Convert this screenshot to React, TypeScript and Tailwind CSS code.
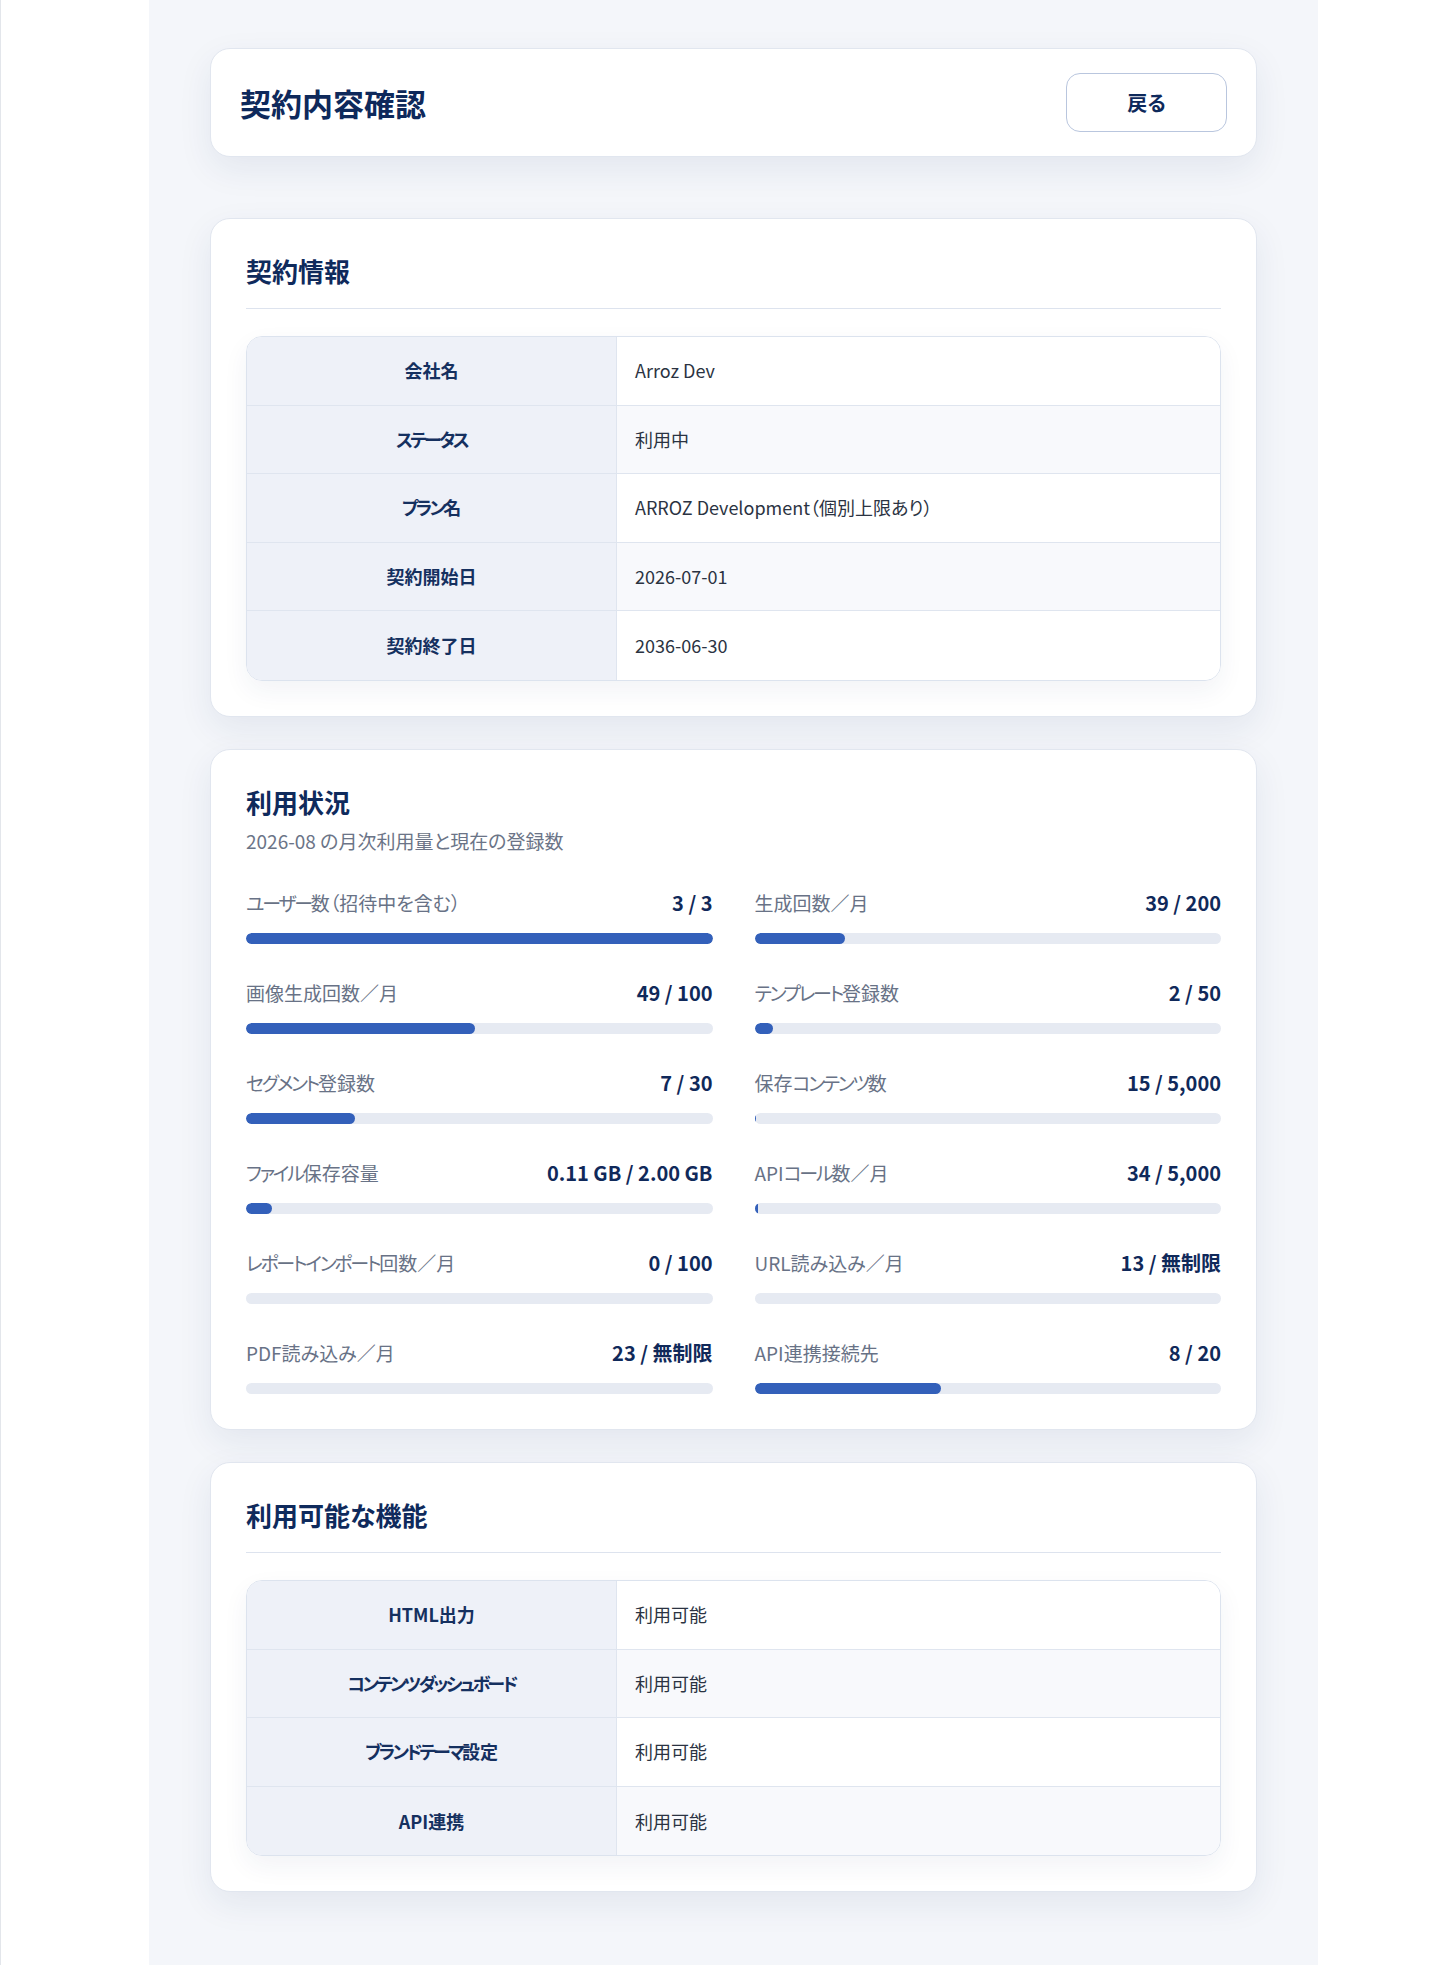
import React from "react";

type Row = { label: string; value: string };
type Usage = { label: string; used: number; limit: number | null; text: string };

const contract: Row[] = [
  { label: "会社名", value: "Arroz Dev" },
  { label: "ステータス", value: "利用中" },
  { label: "プラン名", value: "ARROZ Development（個別上限あり）" },
  { label: "契約開始日", value: "2026-07-01" },
  { label: "契約終了日", value: "2036-06-30" },
];

const usage: Usage[] = [
  { label: "ユーザー数（招待中を含む）", used: 3, limit: 3, text: "3 / 3" },
  { label: "生成回数／月", used: 39, limit: 200, text: "39 / 200" },
  { label: "画像生成回数／月", used: 49, limit: 100, text: "49 / 100" },
  { label: "テンプレート登録数", used: 2, limit: 50, text: "2 / 50" },
  { label: "セグメント登録数", used: 7, limit: 30, text: "7 / 30" },
  { label: "保存コンテンツ数", used: 15, limit: 5000, text: "15 / 5,000" },
  { label: "ファイル保存容量", used: 0.11, limit: 2, text: "0.11 GB / 2.00 GB" },
  { label: "APIコール数／月", used: 34, limit: 5000, text: "34 / 5,000" },
  { label: "レポートインポート回数／月", used: 0, limit: 100, text: "0 / 100" },
  { label: "URL読み込み／月", used: 13, limit: null, text: "13 / 無制限" },
  { label: "PDF読み込み／月", used: 23, limit: null, text: "23 / 無制限" },
  { label: "API連携接続先", used: 8, limit: 20, text: "8 / 20" },
];

const features: Row[] = [
  { label: "HTML出力", value: "利用可能" },
  { label: "コンテンツダッシュボード", value: "利用可能" },
  { label: "ブランドテーマ設定", value: "利用可能" },
  { label: "API連携", value: "利用可能" },
];

function Kana({ text, tight }: { text: string; tight: string }) {
  const parts = text.split(/([\u30A0-\u30FF]+)/);
  return (
    <>
      {parts.map((p, i) =>
        i % 2 === 1 ? (
          <span key={i} className={tight}>
            {p}
          </span>
        ) : (
          <React.Fragment key={i}>{p}</React.Fragment>
        )
      )}
    </>
  );
}

function Card({ children, className = "" }: { children: React.ReactNode; className?: string }) {
  return (
    <section
      className={
        "rounded-[20px] border border-[#e1e6ef] bg-white shadow-[0_12px_34px_rgba(28,52,104,0.08)] " +
        className
      }
    >
      {children}
    </section>
  );
}

function InfoTable({ rows }: { rows: Row[] }) {
  return (
    <div className="mt-[27px] overflow-hidden rounded-2xl border border-[#dce3ee] shadow-[0_10px_26px_rgba(28,52,104,0.06)]">
      {rows.map((r, i) => (
        <div
          key={r.label}
          className={
            "flex h-[68.6px] " + (i < rows.length - 1 ? "border-b border-[#dfe5ef]" : "")
          }
        >
          <div className="flex w-[370px] shrink-0 items-center justify-center border-r border-[#dfe5ef] bg-[#eef1f8] text-[18px] font-bold text-[#15305f]">
            <span>
              <Kana text={r.label} tight="tracking-[-0.15em]" />
            </span>
          </div>
          <div
            className={
              "flex flex-1 items-center px-[18px] text-[18px] text-[#2b3342] " +
              (i % 2 === 1 ? "bg-[#f8f9fc]" : "bg-white")
            }
          >
            {r.value}
          </div>
        </div>
      ))}
    </div>
  );
}

function SectionTitle({ children, divider }: { children: React.ReactNode; divider?: boolean }) {
  return (
    <h2
      className={
        "text-[26px] font-bold leading-[34px] text-[#0f2a5c] " +
        (divider ? "border-b border-[#dde3ee] pb-[20px]" : "")
      }
    >
      {children}
    </h2>
  );
}

function UsageItem({ item }: { item: Usage }) {
  const pct = item.limit ? Math.min(100, (item.used / item.limit) * 100) : 0;
  return (
    <div>
      <div className="flex h-[30px] items-center justify-between leading-[30px]">
        <span className="text-[19px] text-[#687286]">
          <Kana text={item.label} tight="tracking-[-0.12em]" />
        </span>
        <span className="text-[20px] font-bold text-[#10295a]">{item.text}</span>
      </div>
      <div className="mt-[15px] h-[11px] w-full overflow-hidden rounded-full bg-[#e6eaf2]">
        <div className="h-full rounded-full bg-[#3360ba]" style={{ width: `${pct}%` }} />
      </div>
    </div>
  );
}

export default function App() {
  return (
    <div
      className="flex min-h-[1965px] border-l border-[#e3e6eb] bg-white [font-feature-settings:'palt']"
      style={{ fontFamily: '"Noto Sans CJK JP", "Noto Sans", sans-serif' }}
    >
      <div className="w-[148px] shrink-0" />
      <main className="w-[1169px] shrink-0 bg-[#f4f6fa] px-[61px] pb-[73px] pt-[48px]">
        {/* page header */}
        <Card className="flex items-center justify-between px-[29px] py-[24px]">
          <h1 className="text-[31px] font-bold leading-[40px] text-[#0e295b]">契約内容確認</h1>
          <button className="h-[59px] w-[161px] rounded-[14px] border border-[#b9c6de] bg-white text-[20px] font-bold text-[#0e295b]">
            戻る
          </button>
        </Card>

        {/* contract information */}
        <Card className="mt-[61px] p-[35px]">
          <SectionTitle divider>契約情報</SectionTitle>
          <InfoTable rows={contract} />
        </Card>

        {/* usage */}
        <Card className="mt-[32px] p-[35px]">
          <SectionTitle>利用状況</SectionTitle>
          <p className="mt-2 text-[19px] leading-[27px] text-[#6b7487]">
            2026-08 の月次利用量と現在の登録数
          </p>
          <div className="mt-[34px] grid grid-cols-2 gap-x-[42px] gap-y-[34px]">
            {usage.map((u) => (
              <UsageItem key={u.label} item={u} />
            ))}
          </div>
        </Card>

        {/* available features */}
        <Card className="mt-[32px] p-[35px]">
          <SectionTitle divider>利用可能な機能</SectionTitle>
          <InfoTable rows={features} />
        </Card>
      </main>
    </div>
  );
}
